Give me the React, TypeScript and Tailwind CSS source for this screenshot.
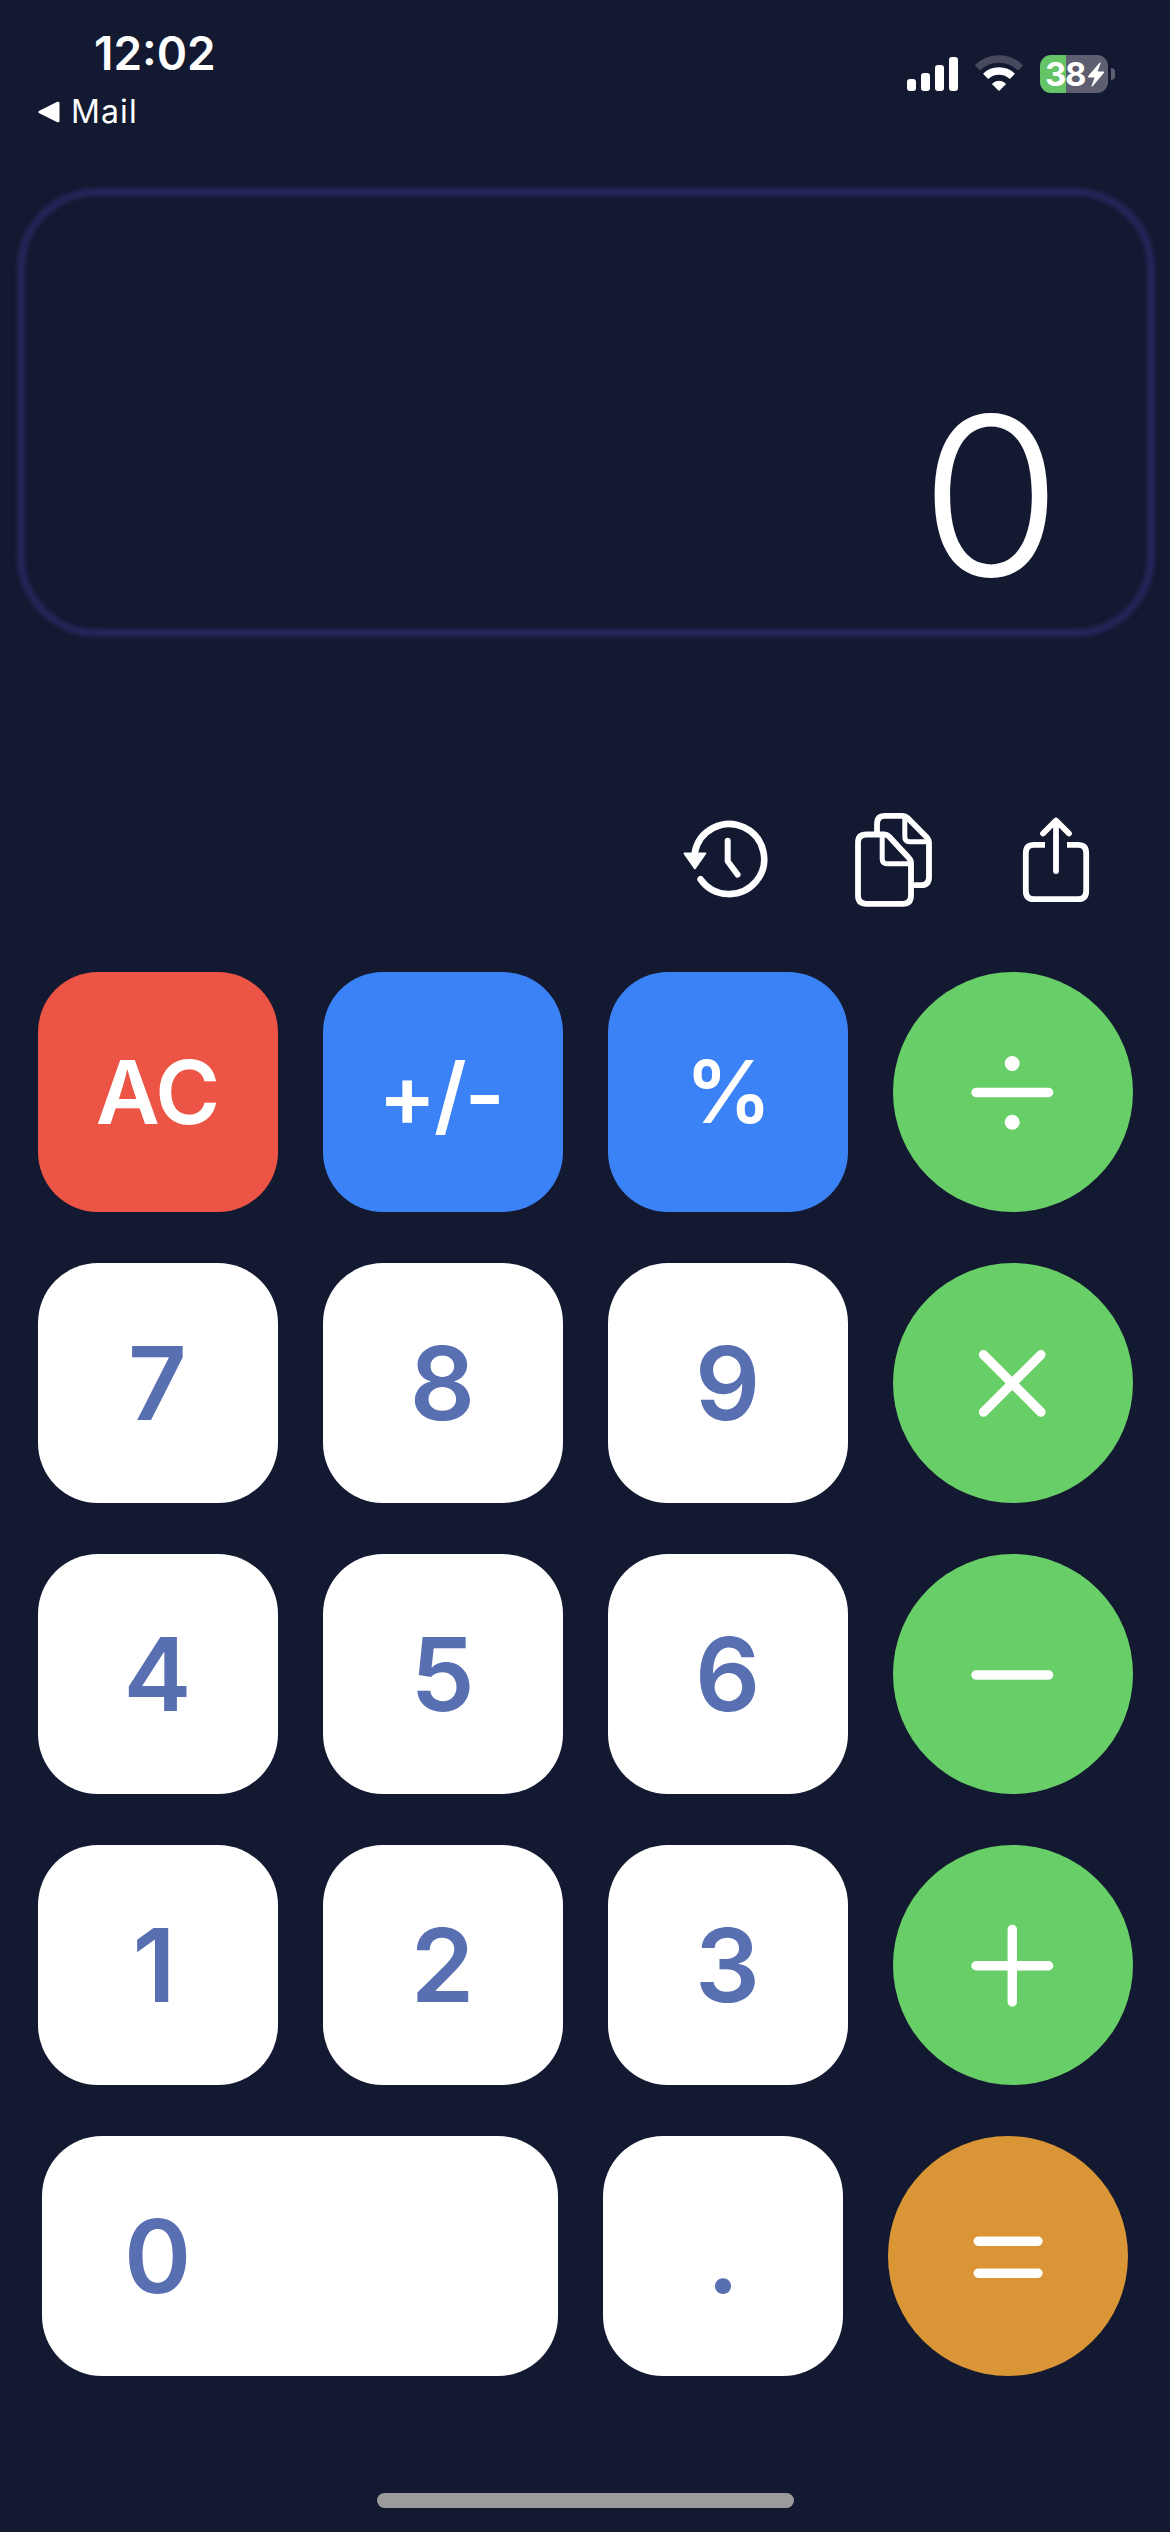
import React, {FC, ReactNode} from "react";
import clsx from "clsx";


type KeyKind = "clear" | "func" | "digit" | "operator" | "equal"

interface KeyType {
  id: string
  kind: KeyKind
  label: ReactNode
  wide?: boolean
}


const kindClass: Record<KeyKind, string> = {
  clear: "rounded-[60px] bg-[#ec5545] text-white text-[88px] font-semibold tracking-[-1px]",
  func: "rounded-[60px] bg-[#3b82f7] text-white text-[86px] font-semibold tracking-[-2px]",
  digit: "rounded-[60px] bg-white text-[#586fb1] text-[102px] font-semibold",
  operator: "rounded-full bg-[#68ce67] text-white",
  equal: "rounded-full bg-[#da9536] text-white",
}


const OperatorIcon: FC<{children: ReactNode}> = ({children}) => (
  <svg className="size-[100px]" viewBox="0 0 100 100" fill="none" stroke="currentColor" strokeWidth="9.4" strokeLinecap="round">
    {children}
  </svg>
)

const DivideIcon = () => (
  <OperatorIcon>
    <path d="M13 50.5H85.6" />
    <circle cx="49.2" cy="21.5" r="7.5" fill="currentColor" stroke="none" />
    <circle cx="49.2" cy="80.3" r="7.5" fill="currentColor" stroke="none" />
  </OperatorIcon>
)

const TimesIcon = () => (
  <OperatorIcon>
    <path d="M20.5 21.7L77.9 79.1M77.9 21.7L20.5 79.1" />
  </OperatorIcon>
)

const MinusIcon = () => (
  <OperatorIcon>
    <path d="M13 51H85.6" />
  </OperatorIcon>
)

const PlusIcon = () => (
  <OperatorIcon>
    <path d="M13 50.7H85.6M49.3 14.4V87" />
  </OperatorIcon>
)

const EqualIcon = () => (
  <OperatorIcon>
    <path d="M20.2 35.3H80M20.2 67.2H80" />
  </OperatorIcon>
)


const rows: KeyType[][] = [
  [
    {id: "ac", kind: "clear", label: "AC"},
    {id: "sign", kind: "func", label: <span className="pt-[5px] pr-[4px] tracking-[-2px]">+/-</span>},
    {id: "percent", kind: "func", label: "%"},
    {id: "divide", kind: "operator", label: <DivideIcon />},
  ],
  [
    {id: "7", kind: "digit", label: "7"},
    {id: "8", kind: "digit", label: "8"},
    {id: "9", kind: "digit", label: "9"},
    {id: "times", kind: "operator", label: <TimesIcon />},
  ],
  [
    {id: "4", kind: "digit", label: "4"},
    {id: "5", kind: "digit", label: "5"},
    {id: "6", kind: "digit", label: "6"},
    {id: "minus", kind: "operator", label: <MinusIcon />},
  ],
  [
    {id: "1", kind: "digit", label: <span className="pr-[7px]">1</span>},
    {id: "2", kind: "digit", label: "2"},
    {id: "3", kind: "digit", label: "3"},
    {id: "plus", kind: "operator", label: <PlusIcon />},
  ],
  [
    {id: "0", kind: "digit", label: "0", wide: true},
    {id: "dot", kind: "digit", label: "."},
    {id: "equal", kind: "equal", label: <EqualIcon />},
  ],
]


function StatusBar() {
  return (
    <header className="flex h-[188px] justify-between">
      <div className="flex flex-col pl-[38px] pt-[25px]">
        <div className="pl-[56px] text-[46px] leading-[56px] font-semibold">12:02</div>
        <div className="mt-[11px] flex items-center gap-[11px] text-[32px] leading-[40px] tracking-[1.1px]">
          <svg className="h-[22px] w-[22px]" viewBox="0 0 22 22" fill="currentColor" stroke="currentColor" strokeWidth="3" strokeLinejoin="round">
            <path d="M2 11L20 2.2V19.8Z" />
          </svg>
          Mail
        </div>
      </div>

      <div className="flex h-[38px] mt-[55px] pr-[55px]">
        <div className="flex h-[36px] items-end gap-[5px]">
          <i className="h-[12px] w-[9px] rounded-[3px] bg-white" />
          <i className="h-[18px] w-[9px] rounded-[3px] bg-white" />
          <i className="h-[26px] w-[9px] rounded-[3px] bg-white" />
          <i className="h-[34px] w-[9px] rounded-[3px] bg-white" />
        </div>
        <svg className="ml-[16px] h-[38px] w-[50px]" viewBox="0 0 50 38" fill="none" stroke="white">
          <path d="M3.4 12.8A31 31 0 0 1 46.6 12.8" strokeWidth="7.4" stroke="#474a5e" />
          <path d="M11.6 21.4A19.4 19.4 0 0 1 38.4 21.4" strokeWidth="7.4" />
          <path d="M25 35.6L18.4 28.9A9.6 9.6 0 0 1 31.6 28.9Z" fill="white" strokeWidth="1" strokeLinejoin="round" />
        </svg>
        <div className="ml-[16px] flex h-[38px] w-[68px] items-center rounded-[11px] bg-linear-to-r from-[#65c466] from-[38%] to-[#5d5e70] to-[38%] pl-[5px] text-[33px] font-bold leading-none">
          <span className="w-[40px] tracking-[-1.4px]">38</span>
          <svg className="ml-[2px] h-[25px] w-[18px]" viewBox="0 0 18 25" fill="white">
            <path d="M12.8 0.5L1 14.3Q0.4 15.4 1.6 15.4H7.6L4.4 24.2Q4.8 25 5.6 24.3L17 10.7Q17.4 9.6 16.4 9.5H10.6L13.7 1.2Q13.6 0.2 12.8 0.5Z" />
          </svg>
        </div>
        <i className="ml-[3px] mt-[13px] h-[12px] w-[4px] rounded-r-full bg-[#5d5e70]" />
      </div>
    </header>
  )
}


function Display({value}: {value: string}) {
  return (
    <section className="relative ml-[17px] mr-[15px] flex h-[449px] items-end justify-end">
      {/* soft glowing outline */}
      <div className="absolute inset-0 rounded-[80px] border-[8px] border-[#232659] blur-[2px]" />
      <div className="origin-right scale-x-[1.04] pr-[89px] pb-[34px] text-[221px] leading-[214px] font-light">{value}</div>
    </section>
  )
}


function Toolbar() {
  return (
    <div className="mt-[175px] flex h-[96px] pl-[680px]">
      <svg className="h-[96px] w-[92px]" viewBox="680 812 92 96" fill="none" stroke="white" strokeWidth="6.6" strokeLinecap="round" strokeLinejoin="round">
        <path d="M694.7 853A35 35 0 1 1 700.6 879.3" />
        <path d="M684.5 853.5H705.3L694.8 868.3Z" fill="white" strokeWidth="2" />
        <path d="M727.7 840.8V861.3L737.6 874.6" strokeWidth="6" />
      </svg>
      <svg className="ml-[78px] h-[96px] w-[90px]" viewBox="850 812 90 96" fill="none" stroke="white" strokeWidth="5.8" strokeLinejoin="round">
        <path d="M866.6 834.5H884.5Q887 834.5 889 836.5L908.5 857.5Q911 860 911 863V895.5Q911 903.8 903 903.8H866.6Q858 903.8 858 895.5V842.5Q858 834.5 866.6 834.5Z" />
        <path d="M882.2 835V859Q882.2 863.8 887 863.8H910.5" strokeWidth="5" />
        <path d="M877 833V824Q877 815.8 885 815.8H902.5Q905.4 815.8 907.4 817.8L926 836.5Q929 839.5 929 842.5V877Q929 885.2 921 885.2H913" />
        <path d="M904.8 817V837Q904.8 841.8 909.6 841.8H928.5" strokeWidth="5" />
      </svg>
      <svg className="ml-[78px] h-[96px] w-[80px]" viewBox="1018 812 80 96" fill="none" stroke="white" strokeWidth="5.8">
        <path d="M1045 844.8H1034Q1025.8 844.8 1025.8 853V891Q1025.8 899.2 1034 899.2H1078Q1086.2 899.2 1086.2 891V853Q1086.2 844.8 1078 844.8H1067" />
        <path d="M1056 871V820.8M1043 833.5L1056 820.5L1069 833.5" strokeLinecap="round" strokeLinejoin="round" />
      </svg>
    </div>
  )
}


function Key({kind, label, wide}: KeyType) {
  return (
    <button className={clsx(
      "flex h-[240px] items-center leading-none",
      wide ? "w-[516px] pl-[82px]" : "w-[240px] justify-center",
      kindClass[kind]
    )}>
      {label}
    </button>
  )
}


function App() {
  const [value] = React.useState("0")

  return (
    <div className="flex h-[2532px] w-[1170px] flex-col bg-[#131930] font-[Inter,sans-serif] text-white">
      <StatusBar />
      <Display value={value} />
      <Toolbar />

      <main className="mt-[64px] flex flex-col gap-[51px]">
        {rows.map((row, i) => (
          <div key={i} className="flex justify-center gap-[45px]">
            {row.map(item => <Key key={item.id} {...item} />)}
          </div>
        ))}
      </main>

      {/* home indicator */}
      <div className="mx-auto mt-[117px] h-[15px] w-[417px] rounded-full bg-[#9b9b9b]" />
    </div>
  )
}


export default App
